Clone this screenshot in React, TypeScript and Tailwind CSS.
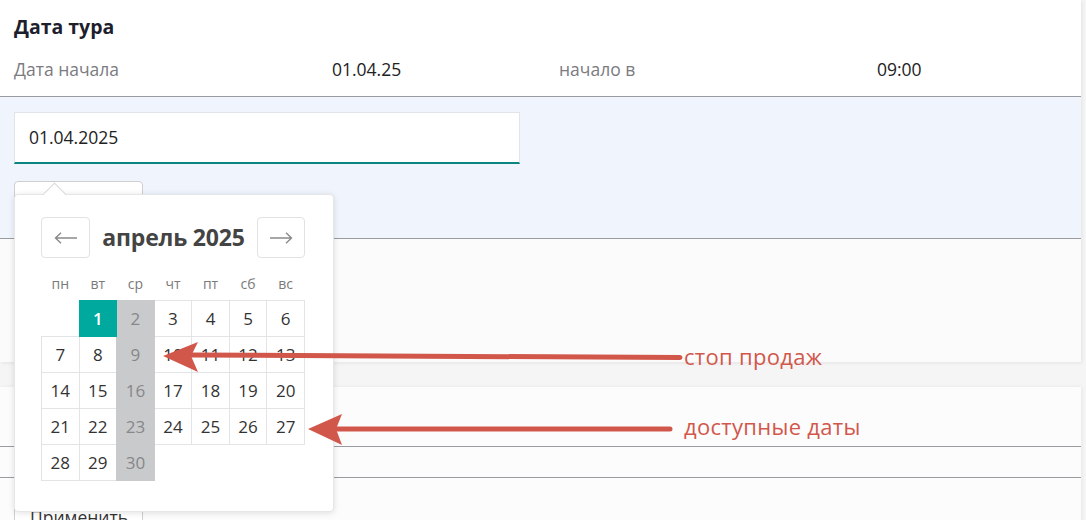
import React from 'react';

const weekDays = ['пн', 'вт', 'ср', 'чт', 'пт', 'сб', 'вс'];

// null = пустая ячейка
const weeks: (number | null)[][] = [
  [null, 1, 2, 3, 4, 5, 6],
  [7, 8, 9, 10, 11, 12, 13],
  [14, 15, 16, 17, 18, 19, 20],
  [21, 22, 23, 24, 25, 26, 27],
  [28, 29, 30, null, null, null, null],
];

function DayCell({ day, col }: { day: number | null; col: number }) {
  if (day === null) return <td className="border-0 p-0" />;
  if (day === 1) {
    return (
      <td className="h-[36px] p-0 text-center align-middle border-double border border-[#00a99d] bg-[#00a99d] text-white font-semibold">
        {day}
      </td>
    );
  }
  if (col === 2) {
    return (
      <td className="h-[36px] p-0 text-center align-middle border-double border border-[#c9cacc] bg-[#c9cacc] text-[#868789]">
        {day}
      </td>
    );
  }
  return (
    <td className="h-[36px] p-0 text-center align-middle border border-[#e3e4e6] bg-white text-[#333]">
      {day}
    </td>
  );
}

function Calendar() {
  return (
    <div className="absolute left-[14px] top-[194px] w-[320px] h-[318px] rounded bg-white border border-[#e6e6e6] shadow-[0_1px_6px_rgba(0,0,0,0.12)] px-[26px] pt-[22px]">
      {/* caret */}
      <div className="absolute left-[31px] top-[-9px] w-[17px] h-[17px] rotate-45 bg-white border-l border-t border-[#d8d8d8]" />

      <div className="flex items-center justify-between w-[264px]">
        <button className="w-[49px] h-[41px] rounded border border-[#e2e2e2] bg-white flex items-center justify-center">
          <svg width="24" height="12" viewBox="0 0 24 12" fill="none" stroke="#8a8a8a" strokeWidth="1.4">
            <path d="M23 6H1.5M7 0.8L1.5 6L7 11.2" />
          </svg>
        </button>
        <span className="text-[23px] font-bold text-[#444] tracking-[-0.2px]">апрель 2025</span>
        <button className="w-[48px] h-[41px] rounded border border-[#e2e2e2] bg-white flex items-center justify-center">
          <svg width="24" height="12" viewBox="0 0 24 12" fill="none" stroke="#8a8a8a" strokeWidth="1.4">
            <path d="M1 6H22.5M17 0.8L22.5 6L17 11.2" />
          </svg>
        </button>
      </div>

      <table className="mt-[15px] w-[264px] table-fixed border-collapse text-[17px]">
        <thead>
          <tr>
            {weekDays.map((d) => (
              <th key={d} className="h-[27px] pb-[6px] p-0 font-normal text-[14px] text-[#7a7a7a] align-top">
                {d}
              </th>
            ))}
          </tr>
        </thead>
        <tbody>
          {weeks.map((w, i) => (
            <tr key={i}>
              {w.map((d, j) => (
                <DayCell key={j} day={d} col={j} />
              ))}
            </tr>
          ))}
        </tbody>
      </table>
    </div>
  );
}

function Annotations() {
  return (
    <>
      <svg className="absolute left-0 top-0 pointer-events-none" width="1086" height="520">
        <line x1="190" y1="355" x2="680" y2="357.5" stroke="#d2574b" strokeWidth="5" strokeLinecap="round" />
        <polygon points="163,356 198,342 191,356 198,372" fill="#d2574b" />
        <line x1="335" y1="429" x2="670" y2="429" stroke="#d2574b" strokeWidth="5" strokeLinecap="round" />
        <polygon points="308,429 342,414 336,429 342,445" fill="#d2574b" />
      </svg>
      <span className="absolute left-[684px] top-[341px] text-[22px] leading-[30px] tracking-[0.3px] text-[#d2574b]">стоп продаж</span>
      <span className="absolute left-[684px] top-[411px] text-[22px] leading-[30px] tracking-[0.3px] text-[#d2574b]">доступные даты</span>
    </>
  );
}

export default function App() {
  return (
    <div className="relative w-[1086px] h-[520px] overflow-hidden bg-[#f5f5f5] font-['Open_Sans',sans-serif]">
      {/* Карточка даты тура */}
      <div className="w-[1081px] bg-white shadow-[1px_1px_4px_rgba(0,0,0,0.08)]">
        <div className="h-[96px] px-[14px] pt-[12px]">
          <h2 className="text-[19.5px] leading-[30px] font-bold text-[#1e1f2e]">Дата тура</h2>
          <div className="mt-[14px] grid grid-cols-[318px_227px_318px_1fr] text-[17.5px] leading-[26px]">
            <span className="text-[#7b7b80]">Дата начала</span>
            <span className="text-[#222]">01.04.25</span>
            <span className="text-[#7b7b80]">начало в</span>
            <span className="text-[#222]">09:00</span>
          </div>
        </div>

        <div className="h-[142px] border-t border-[#9a9aa1] bg-[#f0f5fd] px-[14px] pt-[15px]">
          <div className="w-[506px] h-[52px] bg-white border border-[#e1e4ea] border-b-2 border-b-[#0b857f] flex items-center px-[14px] text-[17.5px] text-[#222]">
            01.04.2025
          </div>
          <div className="mt-[17px] w-[129px] h-[38px] rounded border border-[#cfcfcf] bg-white" />
        </div>

        <div className="h-[124px] border-t border-[#9a9aa1] bg-[#fbfbfb]" />
      </div>

      {/* Нижняя карточка */}
      <div className="mt-[25px] w-[1081px] h-[160px] bg-[#fcfcfc] shadow-[1px_0_4px_rgba(0,0,0,0.06)]">
        <div className="h-[59px]" />
        <div className="h-[31px] border-t border-[#9a9aa1]" />
        <div className="border-t border-[#9a9aa1] px-[14px] pt-[19px]">
          <button className="w-[129px] h-[40px] rounded border border-[#cfcfcf] bg-white text-[17.5px] text-[#333] text-left pl-[15px]">
            Применить
          </button>
        </div>
      </div>

      <Calendar />
      <Annotations />
    </div>
  );
}
